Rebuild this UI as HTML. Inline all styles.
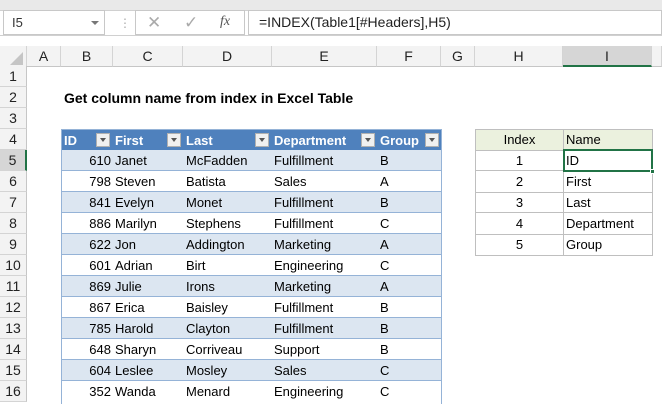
<!DOCTYPE html><html><head><style>
body{margin:0;width:662px;height:404px;overflow:hidden;background:#fff;font-family:"Liberation Sans",sans-serif;font-size:13px;color:#000;position:relative}
div{position:absolute;box-sizing:border-box}
.t{white-space:nowrap;line-height:21px;height:21px}
.ch{top:46px;height:21px;background:#f3f3f3;border-right:1px solid #d4d4d4;border-bottom:1px solid #c6c6c6;text-align:center;line-height:20px;font-size:14px;color:#222}
.rh{left:0;width:27px;height:21px;background:#f3f3f3;border-bottom:1px solid #d4d4d4;border-right:1px solid #c6c6c6;text-align:center;line-height:21px;font-size:14px;color:#222}
.fl{width:14px;height:14px;background:#f0f0f0;border:1px solid #b0b0b0;top:3px}
.fl:after{content:"";position:absolute;left:3px;top:4px;border-left:3.5px solid transparent;border-right:3.5px solid transparent;border-top:4px solid #555}
.hd{color:#fff;font-weight:bold}
.bd{left:62px;width:379px;height:22px;background:#dce6f1;border-top:1px solid #95b3d7;border-bottom:1px solid #95b3d7}
</style></head><body>
<div style="left:0;top:0;width:662px;height:46px;background:#e9e9e9"></div>
<div style="left:0;top:10px;width:662px;height:26px;background:#fff;border-top:1px solid #d0d0d0;border-bottom:1px solid #d0d0d0"></div>
<div style="left:3px;top:10px;width:102px;height:25px;background:#fff;border:1px solid #c8c8c8"></div>
<div class="t" style="left:12px;top:12px;color:#333">I5</div>
<div style="left:91px;top:21px;border-left:4px solid transparent;border-right:4px solid transparent;border-top:4px solid #777"></div>
<div style="left:119px;top:16px;color:#aaa;font-size:12px">⋮</div>
<div style="left:135px;top:10px;width:110px;height:25px;background:#fff;border:1px solid #c8c8c8"></div>
<div style="left:147px;top:13px;color:#aaa;font-size:17px">✕</div>
<div style="left:184px;top:13px;color:#aaa;font-size:17px">✓</div>
<div style="left:220px;top:14px;color:#555;font-style:italic;font-family:'Liberation Serif',serif;font-size:14px">fx</div>
<div style="left:248px;top:10px;width:414px;height:25px;background:#fff;border:1px solid #c8c8c8"></div>
<div class="t" style="left:259px;top:12px;font-size:14px;color:#222">=INDEX(Table1[#Headers],H5)</div>
<div style="left:0;top:36px;width:662px;height:10px;background:#fff"></div>
<div class="ch" style="left:0;width:27px"></div>
<div style="left:10px;top:52px;border-left:13px solid transparent;border-bottom:13px solid #c5c5c5"></div>
<div class="ch" style="left:27px;width:34px">A</div>
<div class="ch" style="left:61px;width:52px">B</div>
<div class="ch" style="left:113px;width:70px">C</div>
<div class="ch" style="left:183px;width:89px">D</div>
<div class="ch" style="left:272px;width:105px">E</div>
<div class="ch" style="left:377px;width:64px">F</div>
<div class="ch" style="left:441px;width:34px">G</div>
<div class="ch" style="left:475px;width:88px">H</div>
<div class="ch" style="left:563px;width:89px;background:#d6d6d6;border-bottom:2px solid #217346">I</div>
<div class="ch" style="left:652px;width:10px"></div>
<div class="rh" style="top:66px">1</div><div class="rh" style="top:87px">2</div><div class="rh" style="top:108px">3</div><div class="rh" style="top:129px">4</div>
<div class="rh" style="top:150px;background:#d6d6d6;border-right:2px solid #217346">5</div>
<div class="rh" style="top:171px">6</div><div class="rh" style="top:192px">7</div><div class="rh" style="top:213px">8</div><div class="rh" style="top:234px">9</div><div class="rh" style="top:255px">10</div><div class="rh" style="top:276px">11</div><div class="rh" style="top:297px">12</div><div class="rh" style="top:318px">13</div><div class="rh" style="top:339px">14</div><div class="rh" style="top:360px">15</div><div class="rh" style="top:381px">16</div>
<div class="t" style="left:64px;top:88px;font-weight:bold;font-size:14px">Get column name from index in Excel Table</div>
<!-- table -->
<div style="left:61px;top:129px;width:381px;height:275px;border:1px solid #95b3d7;border-bottom:none"></div>
<div style="left:62px;top:130px;width:379px;height:20px;background:#4f81bd"></div>
<div class="bd" style="top:150px;border-top:none;height:21px"></div>
<div class="bd" style="top:191px"></div>
<div class="bd" style="top:233px"></div>
<div class="bd" style="top:275px"></div>
<div class="bd" style="top:317px"></div>
<div class="bd" style="top:359px"></div>
<div class="t hd" style="left:64px;top:130px">ID</div><div class="fl" style="left:96px;top:133px"></div>
<div class="t hd" style="left:115px;top:130px">First</div><div class="fl" style="left:167px;top:133px"></div>
<div class="t hd" style="left:186px;top:130px">Last</div><div class="fl" style="left:255px;top:133px"></div>
<div class="t hd" style="left:274px;top:130px">Department</div><div class="fl" style="left:361px;top:133px"></div>
<div class="t hd" style="left:380px;top:130px">Group</div><div class="fl" style="left:425px;top:133px"></div>
<div style="left:61px;top:150px;width:52px;text-align:right;padding-right:2px;line-height:21px">610<br>798<br>841<br>886<br>622<br>601<br>869<br>867<br>785<br>648<br>604<br>352</div>
<div style="left:115px;top:150px;line-height:21px">Janet<br>Steven<br>Evelyn<br>Marilyn<br>Jon<br>Adrian<br>Julie<br>Erica<br>Harold<br>Sharyn<br>Leslee<br>Wanda</div>
<div style="left:186px;top:150px;line-height:21px">McFadden<br>Batista<br>Monet<br>Stephens<br>Addington<br>Birt<br>Irons<br>Baisley<br>Clayton<br>Corriveau<br>Mosley<br>Menard</div>
<div style="left:274px;top:150px;line-height:21px">Fulfillment<br>Sales<br>Fulfillment<br>Fulfillment<br>Marketing<br>Engineering<br>Marketing<br>Fulfillment<br>Fulfillment<br>Support<br>Sales<br>Engineering</div>
<div style="left:380px;top:150px;line-height:21px">B<br>A<br>B<br>C<br>A<br>C<br>A<br>B<br>B<br>B<br>C<br>C</div>
<!-- right table -->
<div style="left:475px;top:129px;width:178px;height:21px;background:#ebf1de"></div>
<div style="left:475px;top:129px;width:89px;height:127px;border:1px solid #bfbfbf"></div>
<div style="left:563px;top:129px;width:90px;height:127px;border:1px solid #bfbfbf"></div>
<div style="left:475px;top:150px;width:178px;height:21px;border-top:1px solid #bfbfbf;border-bottom:1px solid #bfbfbf"></div>
<div style="left:475px;top:192px;width:178px;height:21px;border-top:1px solid #bfbfbf;border-bottom:1px solid #bfbfbf"></div>
<div style="left:475px;top:234px;width:178px;height:1px;background:#bfbfbf"></div>
<div style="left:475px;top:129px;width:89px;text-align:center;line-height:21px">Index<br>1<br>2<br>3<br>4<br>5</div>
<div style="left:566px;top:129px;line-height:21px">Name<br>ID<br>First<br>Last<br>Department<br>Group</div>
<div style="left:563px;top:149px;width:90px;height:23px;border:2px solid #217346"></div>
<div style="left:650px;top:169px;width:5px;height:5px;background:#217346;border:1px solid #fff"></div>
</body></html>
